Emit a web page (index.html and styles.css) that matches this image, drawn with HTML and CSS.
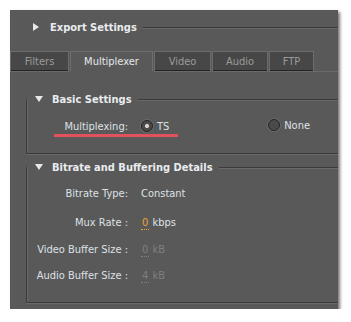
FILE: index.html
```html
<!DOCTYPE html>
<html>
<head>
<meta charset="utf-8">
<link rel="stylesheet" href="styles.css">
</head>
<body>
<div class="panel">
  <div class="section-head top-head">
    <span class="tri tri-right"></span>
    <span class="head-text">Export Settings</span>
    <span class="head-line"></span>
  </div>

  <div class="tabs">
    <div class="tab w-filters">Filters</div>
    <div class="tab active w-mux">Multiplexer</div>
    <div class="tab w-video">Video</div>
    <div class="tab w-audio">Audio</div>
    <div class="tab w-ftp">FTP</div>
    <div class="tab-fill"></div>
  </div>

  <div class="group basic">
    <div class="section-head group-head">
      <span class="tri tri-down"></span>
      <span class="head-text">Basic Settings</span>
      <span class="head-line"></span>
    </div>
    <div class="mux-row">
      <span class="mark">
        <span class="label mux-label">Multiplexing:</span>
        <span class="radio checked"></span>
        <span class="opt">TS</span>
      </span>
      <span class="none-opt">
        <span class="radio"></span>
        <span class="opt">None</span>
      </span>
    </div>
  </div>

  <div class="group bitrate">
    <div class="section-head group-head">
      <span class="tri tri-down"></span>
      <span class="head-text">Bitrate and Buffering Details</span>
      <span class="head-line"></span>
    </div>
    <div class="rows">
      <div class="row r1">
        <span class="label">Bitrate Type:</span>
        <span class="value">Constant</span>
      </div>
      <div class="row r2">
        <span class="label">Mux Rate :</span>
        <span class="value"><span class="num hot">0</span> kbps</span>
      </div>
      <div class="row r3">
        <span class="label">Video Buffer Size :</span>
        <span class="value dis"><span class="num">0</span> kB</span>
      </div>
      <div class="row r4">
        <span class="label">Audio Buffer Size :</span>
        <span class="value dis"><span class="num">4</span> kB</span>
      </div>
    </div>
  </div>
</div>
</body>
</html>
```

FILE: styles.css
```css
html, body {
  margin: 0;
  padding: 0;
  background: #ffffff;
}

body {
  font-family: "DejaVu Sans Condensed", "DejaVu Sans", sans-serif;
  font-size: 11px;
  color: #dde1e6;
}

.panel {
  margin: 10px 0 0 10px;
  width: 328px;
  height: 299px;
  background: #595959;
  box-shadow: 2px 2px 3px rgba(0, 0, 0, 0.55);
  display: flex;
  flex-direction: column;
}

/* section headers */
.section-head {
  display: flex;
  align-items: center;
  height: 14px;
}

.top-head {
  margin-top: 10px;
  padding-left: 23px;
}

.tri {
  width: 0;
  height: 0;
  flex: none;
}

.tri-right {
  border-top: 4px solid transparent;
  border-bottom: 4px solid transparent;
  border-left: 6px solid #e8e8e8;
  margin-right: 11px;
}

.tri-down {
  border-left: 4px solid transparent;
  border-right: 4px solid transparent;
  border-top: 6px solid #e8e8e8;
  margin-right: 9px;
  margin-left: 2px;
}

.head-text {
  font-weight: bold;
  font-size: 11px;
  color: #e9ecef;
  white-space: nowrap;
}

.head-line {
  flex: 1;
  height: 0;
  border-top: 1px solid #3a3a3a;
  border-bottom: 1px solid #6a6a6a;
  margin-left: 6px;
  margin-top: 2px;
}

/* tabs */
.tabs {
  display: flex;
  margin-top: 17px;
  height: 20px;
}

.tab {
  box-sizing: border-box;
  height: 20px;
  background: #474747;
  border: 1px solid #6c6c6c;
  border-bottom: none;
  box-shadow: inset 0 -1px 0 #232323, 0 1px 0 #6a6a6a;
  color: #9b9b9b;
  display: flex;
  align-items: center;
  justify-content: center;
  margin-right: 1px;
  padding-bottom: 1px;
}

.tab.active {
  background: #595959;
  border-color: #6e6e6e;
  box-shadow: none;
  color: #e6e8ea;
}

.w-filters { width: 59px; }
.w-mux { width: 83px; }
.w-video { width: 57px; }
.w-audio { width: 56px; }
.w-ftp { width: 45px; }

.tab-fill {
  flex: 1;
  align-self: flex-end;
  height: 1px;
  margin-bottom: -1px;
  background: #6a6a6a;
  margin-left: -1px;
}

/* groups */
.group {
  margin-left: 16px;
  border-left: 1px solid #3a3a3a;
  border-bottom: 1px solid #3a3a3a;
  box-shadow: inset 1px 0 0 #676767, 0 1px 0 #6a6a6a;
}

.group-head {
  margin-top: -7px;
  padding-left: 6px;
}

.basic {
  margin-top: 28px;
  height: 54px;
}

.bitrate {
  margin-top: 13px;
  height: 135px;
}

.mux-row {
  display: flex;
  align-items: center;
  margin-top: 10px;
  height: 18px;
}

.mark {
  display: flex;
  align-items: center;
  margin-left: 27px;
  padding: 0 9px 1px 9px;
  border-bottom: 3px solid #e2525d;
  height: 14px;
  margin-top: 6px;
}

.mark .label {
  width: 65px;
  text-align: right;
}

.label {
  white-space: nowrap;
}

.radio {
  box-sizing: border-box;
  width: 12px;
  height: 12px;
  border-radius: 50%;
  border: 1px solid #262626;
  background: radial-gradient(circle, #4b4b4b 0, #4b4b4b 60%, #3a3a3a 100%);
  box-shadow: 0 0 0 1px #6a6a6a;
  flex: none;
}

.radio.checked {
  background: radial-gradient(circle, #d6d6d6 0, #d6d6d6 1.6px, #4b4b4b 2.4px, #4b4b4b 60%, #3a3a3a 100%);
}

.mark .radio {
  margin-left: 13px;
}

.opt {
  margin-left: 4px;
}

.none-opt {
  display: flex;
  align-items: center;
  margin-left: auto;
  margin-right: 28px;
  margin-top: 0;
}

.rows {
  display: flex;
  flex-direction: column;
  margin-top: 11px;
}

.row {
  display: grid;
  grid-template-columns: 101px auto;
  column-gap: 13px;
  height: 16px;
  align-items: center;
}

.row .label {
  text-align: right;
}

.r2 { margin-top: 13px; }
.r3 { margin-top: 11px; }
.r4 { margin-top: 10px; }

.num {
  border-bottom: 1px dotted currentColor;
  padding: 0 1px;
}

.hot {
  color: #e9a431;
}

.dis {
  color: #7f7f7f;
}
```
